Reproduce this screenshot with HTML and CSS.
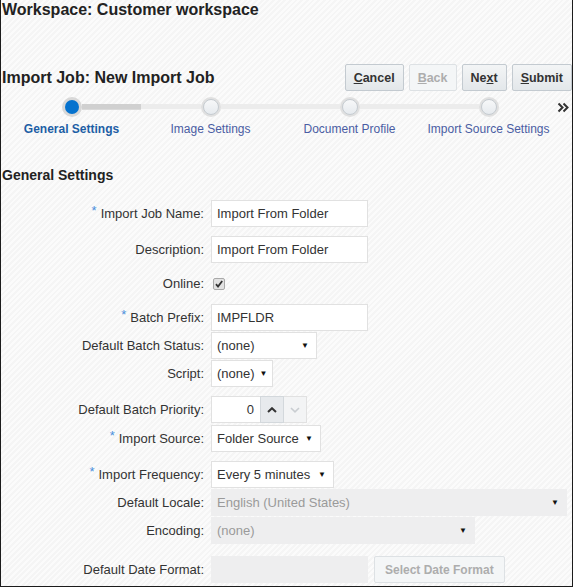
FILE: index.html
```html
<!DOCTYPE html>
<html>
<head>
    <title>Import Job</title>
    <link rel="stylesheet" href="styles.css">
</head>
<body>
<div class="frame">
    <h1 class="title">Workspace: Customer workspace</h1>

    <div class="header-row">
        <h2 class="job-title">Import Job: New Import Job</h2>
        <div class="toolbar">
            <span class="button"><u>C</u>ancel</span>
            <span class="button disabled"><u>B</u>ack</span>
            <span class="button">Ne<u>x</u>t</span>
            <span class="button"><u>S</u>ubmit</span>
        </div>
    </div>

    <!-- train of steps -->
    <div class="train">
        <div class="step current">
            <div class="track">
                <span class="half empty"></span>
                <span class="stop"></span>
                <span class="half done"></span>
            </div>
            <div class="step-label">General Settings</div>
        </div>
        <div class="step">
            <div class="track">
                <span class="half"></span>
                <span class="stop"></span>
                <span class="half"></span>
            </div>
            <div class="step-label">Image Settings</div>
        </div>
        <div class="step">
            <div class="track">
                <span class="half"></span>
                <span class="stop"></span>
                <span class="half"></span>
            </div>
            <div class="step-label">Document Profile</div>
        </div>
        <div class="step">
            <div class="track">
                <span class="half"></span>
                <span class="stop"></span>
                <span class="half empty"></span>
            </div>
            <div class="step-label">Import Source Settings</div>
        </div>
        <svg class="more" width="12" height="11" viewBox="0 0 12 11">
            <path d="M1.5 1.5 L5.5 5.5 L1.5 9.5 M6.5 1.5 L10.5 5.5 L6.5 9.5" fill="none" stroke="#333" stroke-width="2"/>
        </svg>
    </div>

    <h3 class="section">General Settings</h3>

    <div class="form">
        <div class="row">
            <label class="label"><span class="req">*</span>Import Job Name:</label>
            <span class="input w157">Import From Folder</span>
        </div>
        <div class="row mt9">
            <label class="label">Description:</label>
            <span class="input w157">Import From Folder</span>
        </div>
        <div class="row mt7">
            <label class="label">Online:</label>
            <svg class="check" width="12" height="12" viewBox="0 0 12 12">
                <rect x="0.5" y="0.5" width="11" height="11" rx="1.5" fill="#e2e2e2" stroke="#a9a9a9"/>
                <path d="M3 6.2 L5 8.5 L9.2 3" fill="none" stroke="#333" stroke-width="1.8"/>
            </svg>
        </div>
        <div class="row mt7">
            <label class="label"><span class="req">*</span>Batch Prefix:</label>
            <span class="input w157">IMPFLDR</span>
        </div>
        <div class="row mt1">
            <label class="label">Default Batch Status:</label>
            <span class="select w106">(none)<span class="caret">▼</span></span>
        </div>
        <div class="row mt1">
            <label class="label">Script:</label>
            <span class="select w62">(none)<span class="caret">▼</span></span>
        </div>
        <div class="row mt9">
            <label class="label">Default Batch Priority:</label>
            <div class="spinner">
                <span class="number">0</span>
                <span class="spin up">
                    <svg width="10" height="6" viewBox="0 0 10 6"><path d="M1 5 L5 1.2 L9 5" fill="none" stroke="#333" stroke-width="2"/></svg>
                </span>
                <span class="spin down">
                    <svg width="10" height="6" viewBox="0 0 10 6"><path d="M1 1 L5 4.8 L9 1" fill="none" stroke="#c9cdd1" stroke-width="1.6"/></svg>
                </span>
            </div>
        </div>
        <div class="row mt2">
            <label class="label"><span class="req">*</span>Import Source:</label>
            <span class="select w110">Folder Source<span class="caret">▼</span></span>
        </div>
        <div class="row mt9">
            <label class="label"><span class="req">*</span>Import Frequency:</label>
            <span class="select w123">Every 5 minutes<span class="caret">▼</span></span>
        </div>
        <div class="row mt1">
            <label class="label">Default Locale:</label>
            <span class="select disabled w356">English (United States)<span class="caret">▼</span></span>
        </div>
        <div class="row mt1">
            <label class="label">Encoding:</label>
            <span class="select disabled w264">(none)<span class="caret">▼</span></span>
        </div>
        <div class="row mt12">
            <label class="label">Default Date Format:</label>
            <span class="input disabled w157"></span>
            <span class="button disabled date-btn">Select Date Format</span>
        </div>
    </div>
</div>
</body>
</html>
```

FILE: styles.css
```css
* {
    margin: 0;
    box-sizing: border-box;
}

body {
    margin: 0;
    font-family: "Liberation Sans", Arial, sans-serif;
    font-size: 12px;
    color: #333;
}

.frame {
    width: 573px;
    height: 587px;
    border: 1px solid #1c1c1c;
    border-top: none;
    padding-left: 1px;
    background: repeating-linear-gradient(135deg, #f5f5f5 0, #f5f5f5 2px, #fbfbfb 2px, #fbfbfb 4px);
}

.title {
    font-size: 16px;
    line-height: 20px;
    color: #222;
}

.header-row {
    margin-top: 44px;
    display: flex;
    align-items: center;
    justify-content: space-between;
    height: 27px;
}

.job-title {
    font-size: 16px;
    color: #222;
}

.toolbar {
    display: flex;
    gap: 5px;
}

.button {
    display: inline-flex;
    align-items: center;
    justify-content: center;
    height: 27px;
    padding: 0 8px;
    border: 1px solid #c3cad0;
    border-radius: 2px;
    background: linear-gradient(#f3f5f6, #e3e7ea);
    font-weight: bold;
    font-size: 12.5px;
    color: #333;
}

.button.disabled {
    background: #f4f6f7;
    border-color: #dde1e4;
    color: #adadad;
}

/* train */
.train {
    margin-top: 6px;
    display: flex;
    align-items: flex-start;
}

.step {
    width: 139px;
    display: flex;
    flex-direction: column;
    align-items: center;
}

.track {
    width: 100%;
    height: 20px;
    display: flex;
    align-items: center;
}

.half {
    flex: 1;
    height: 6px;
    background: #ececec;
    border-bottom: 1px solid #f8f8f8;
}

.half.done {
    background: #d0d0d0;
    border-bottom-color: #dadada;
}

.half.empty {
    visibility: hidden;
}

.stop {
    width: 20px;
    height: 20px;
    border-radius: 50%;
    background: #e0e0e0;
    display: flex;
    align-items: center;
    justify-content: center;
}

.stop::after {
    content: "";
    width: 14px;
    height: 14px;
    border-radius: 50%;
    border: 1px solid #c6ccd1;
    background: linear-gradient(#f7f8f9, #e6eaee);
}

.current .stop {
    background: #d8d8d8;
}

.current .stop::after {
    border: none;
    background: #0572ce;
}

.step-label {
    margin-top: 5px;
    line-height: 14px;
    color: #4a5da3;
    white-space: nowrap;
}

.current .step-label {
    color: #1d5ea5;
    font-weight: bold;
}

.more {
    margin: 5px 0 0 -1px;
}

.section {
    margin-top: 31px;
    font-size: 14px;
    line-height: 16px;
    color: #222;
}

/* form rows */
.form {
    margin-top: 17px;
    font-size: 13px;
}

.row {
    display: flex;
    align-items: center;
    gap: 7px;
    height: 27px;
}

.mt1 { margin-top: 1px; }
.mt2 { margin-top: 2px; }
.mt7 { margin-top: 7px; }
.mt9 { margin-top: 9px; }
.mt12 { margin-top: 12px; }

.label {
    width: 202px;
    text-align: right;
    color: #333;
}

.req {
    color: #4a8fdc;
    position: relative;
    top: -3px;
    margin-right: 4px;
}

.input,
.select {
    height: 27px;
    display: flex;
    align-items: center;
    padding: 0 5px;
    background: #fff;
    border: 1px solid #e1e1e1;
    color: #333;
    white-space: nowrap;
}

.select {
    justify-content: space-between;
    gap: 5px;
    padding-right: 7px;
}

.caret {
    font-size: 8px;
    color: #111;
}

.select.disabled,
.input.disabled {
    background: #eeeeef;
    border-color: #eeeeef;
    color: #9a9a9a;
}

.w62 { width: 62px; }
.w106 { width: 106px; }
.w110 { width: 110px; }
.w123 { width: 123px; }
.w157 { width: 157px; }
.w264 { width: 264px; }
.w356 { width: 356px; }

.check {
    margin-left: 2px;
}

.spinner {
    display: flex;
    height: 27px;
}

.number {
    width: 49px;
    display: flex;
    align-items: center;
    justify-content: flex-end;
    padding-right: 6px;
    background: #fff;
    border: 1px solid #e1e1e1;
    border-right: none;
}

.spin {
    width: 24px;
    display: flex;
    align-items: center;
    justify-content: center;
    border: 1px solid #e1e1e1;
}

.spin.up {
    background: #e7eaed;
    border-color: #d3d8dc;
}

.spin.down {
    width: 23px;
    background: #f3f4f5;
    border-left: none;
}

.date-btn {
    margin-left: -1px;
    padding: 0 10px;
    font-size: 12px;
}
```
